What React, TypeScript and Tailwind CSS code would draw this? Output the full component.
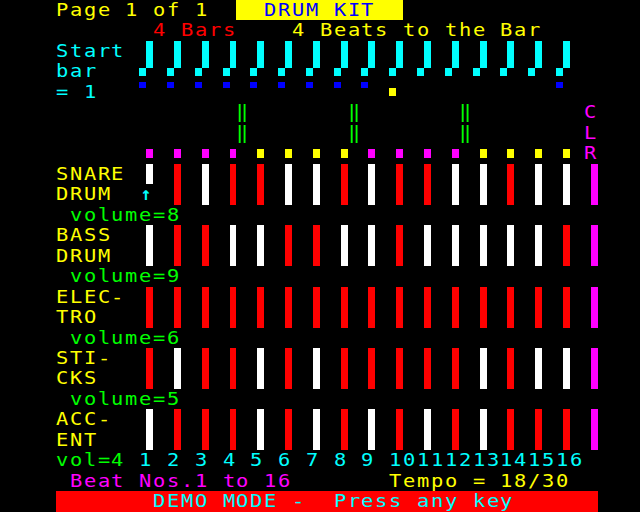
import clsx from "clsx";

type Cell = { ch?: string; fg?: string; bg?: string; gfx?: number[]; cls?: string };

const FG: Record<string, string> = {
  Y: "text-[#ffff00]",
  R: "text-[#ff0000]",
  C: "text-[#00ffff]",
  G: "text-[#00ff00]",
  M: "text-[#ff00ff]",
  B: "text-[#0000ff]",
  W: "text-white",
};

const BG: Record<string, string> = {
  Y: "bg-[#ffff00]",
  R: "bg-[#ff0000]",
  C: "bg-[#00ffff]",
  G: "bg-[#00ff00]",
  M: "bg-[#ff00ff]",
  B: "bg-[#0000ff]",
  W: "bg-white",
};

// sixel masks: tl tr ml mr bl br
const RIGHT = [0, 1, 0, 1, 0, 1];
const FOOT = [0, 1, 1, 0, 0, 0];
const TOP_L = [1, 0, 0, 0, 0, 0];
const MID_L = [0, 0, 1, 0, 0, 0];
const MID_R = [0, 0, 0, 1, 0, 0];

const drums = [
  { a: "SNARE", b: "DRUM", vol: 8, pat: "WRWRRWWRWRRWWRWW" },
  { a: "BASS", b: "DRUM", vol: 9, pat: "WRRWWRRWWRWWWWWR" },
  { a: "ELEC-", b: "TRO", vol: 6, pat: "RRRRRRRRRRRRRRRR" },
  { a: "STI-", b: "CKS", vol: 5, pat: "RWRRWRWRRRRRWRWW" },
  { a: "ACC-", b: "ENT", vol: 4, pat: "WRRRWRWRWRWRWRRR" },
];

function buildScreen() {
  const rows: Cell[][] = Array.from({ length: 25 }, () => Array.from({ length: 40 }, () => ({})));
  const put = (r: number, c: number, text: string, fg: string) =>
    [...text].forEach((ch, i) => (rows[r][c + i] = { ...rows[r][c + i], ch, fg }));
  const gfx = (r: number, c: number, mask: number[], fg: string) => (rows[r][c] = { ...rows[r][c], gfx: mask, fg });
  const fill = (r: number, c0: number, c1: number, bg: string) => {
    for (let c = c0; c <= c1; c++) rows[r][c].bg = bg;
  };
  const beat = (k: number) => 7 + 2 * k;

  put(0, 1, "Page 1 of 1", "Y");
  fill(0, 14, 25, "Y");
  put(0, 16, "DRUM KIT", "B");
  put(1, 8, "4 Bars", "R");
  put(1, 18, "4 Beats to the Bar", "Y");

  put(2, 1, "Start", "C");
  put(3, 1, "bar", "C");
  put(4, 1, "= 1", "C");
  for (let k = 0; k < 16; k++) {
    gfx(2, beat(k), RIGHT, "C");
    gfx(3, beat(k), FOOT, "C");
    if (k < 9 || k === 15) gfx(4, beat(k), TOP_L, "B");
    if (k === 9) gfx(4, beat(k), MID_L, "Y");
    gfx(7, beat(k), MID_R, Math.floor(k / 4) % 2 === 0 ? "M" : "Y");
  }
  for (const c of [14, 22, 30]) {
    put(5, c, "‖", "G");
    put(6, c, "‖", "G");
  }
  put(5, 39, "C", "M");
  put(6, 39, "L", "M");
  put(7, 39, "R", "M");

  drums.forEach((d, i) => {
    const r = 8 + 3 * i;
    put(r, 1, d.a, "Y");
    put(r + 1, 1, d.b, "Y");
    for (let k = 0; k < 16; k++) {
      gfx(r, beat(k), RIGHT, d.pat[k]);
      gfx(r + 1, beat(k), RIGHT, d.pat[k]);
    }
    gfx(r, 39, RIGHT, "M");
    gfx(r + 1, 39, RIGHT, "M");
    if (i < 4) put(r + 2, 2, `volume=${d.vol}`, "G");
  });
  // edit cursor under beat 1
  rows[9][7] = { ch: "↑", fg: "C", cls: "text-[18px] font-bold leading-[20px] text-center w-full !scale-x-100" };

  put(22, 1, "vol=4", "G");
  put(22, 7, "1 2 3 4 5 6 7 8 9 10111213141516", "C");
  put(23, 2, "Beat Nos.1 to 16", "M");
  put(23, 25, "Tempo = 18/30", "Y");
  fill(24, 1, 39, "R");
  put(24, 8, "DEMO MODE -  Press any key", "C");
  return rows;
}

function CellView({ cell }: { cell: Cell }) {
  return (
    <div className={clsx("h-full w-[13.9px] shrink-0", cell.bg && BG[cell.bg])}>
      {cell.gfx ? (
        <div className="grid h-full grid-cols-2 grid-rows-[3fr_4fr_3fr]">
          {cell.gfx.map((on, i) => (
            <div key={i} className={on ? BG[cell.fg!] : ""} />
          ))}
        </div>
      ) : cell.ch && cell.ch !== " " ? (
        <span className={clsx("inline-block origin-left scale-x-[1.2]", FG[cell.fg!], cell.cls)}>{cell.ch}</span>
      ) : null}
    </div>
  );
}

export default function App() {
  const screen = buildScreen();
  return (
    <div className="h-[512px] w-[640px] overflow-hidden bg-black pl-[42px] font-['DejaVu_Sans_Mono',monospace] text-[17px] leading-[20.48px]">
      {screen.map((row, r) => (
        <div key={r} className="flex h-[20.48px]">
          {row.map((cell, c) => (
            <CellView key={c} cell={cell} />
          ))}
        </div>
      ))}
    </div>
  );
}
